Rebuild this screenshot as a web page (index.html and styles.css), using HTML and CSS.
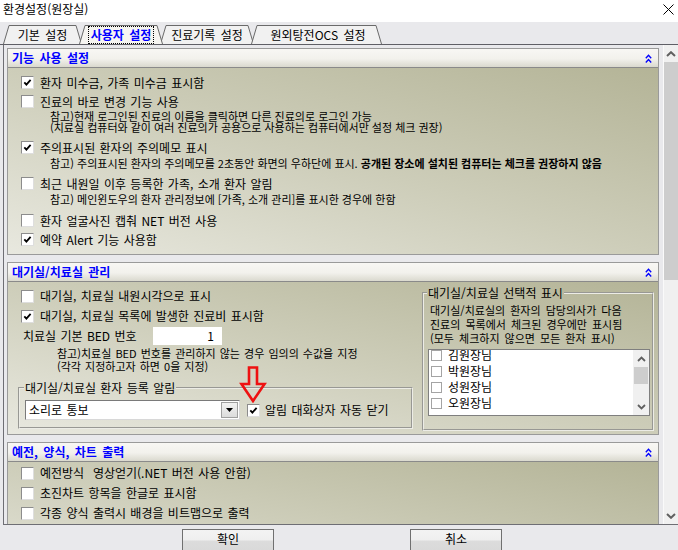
FILE: index.html
```html
<!DOCTYPE html>
<html lang="ko">
<head>
<meta charset="utf-8">
<title>환경설정(원장실)</title>
<link rel="stylesheet" href="styles.css">
</head>
<body>
<div class="window">
  <div class="titlebar">
    <span class="title">환경설정(원장실)</span>
    <svg class="close" width="11" height="11" viewBox="0 0 11 11"><path d="M0.5 0.5L10.5 10.5M10.5 0.5L0.5 10.5" stroke="#000" stroke-width="1" fill="none"/></svg>
  </div>

  <div class="tabstrip">
    <div class="tab w1"><svg class="tab-shape" width="79" height="19" viewBox="0 0 79 19"><polyline points="0.5,19 6,0.5 73,0.5 78.5,19"/></svg><span class="tab-text">기본 설정</span></div>
    <div class="tab w2 active"><svg class="tab-shape" width="84" height="19" viewBox="0 0 84 19"><polyline points="0.5,19 6,0.5 78,0.5 83.5,19"/></svg><span class="tab-text">사용자 설정</span></div>
    <div class="tab w3"><svg class="tab-shape" width="94" height="19" viewBox="0 0 94 19"><polyline points="0.5,19 6,0.5 88,0.5 93.5,19"/></svg><span class="tab-text">진료기록 설정</span></div>
    <div class="tab w4"><svg class="tab-shape" width="131" height="19" viewBox="0 0 131 19"><polyline points="0.5,19 6,0.5 125,0.5 130.5,19"/></svg><span class="tab-text">원외탕전OCS 설정</span></div>
  </div>

  <div class="tabpage">
    <div class="viewport">
      <div class="sections">

        <section class="sec">
          <div class="sec-head">
            <span class="sec-title">기능 사용 설정</span>
            <svg class="collapse" width="7" height="9" viewBox="0 0 7 9"><path d="M0.8 4.2L3.5 1.3L6.2 4.2M0.8 8.4L3.5 5.5L6.2 8.4" stroke="#0000ff" stroke-width="1.4" fill="none"/></svg>
          </div>
          <div class="sec-body b1">
            <div class="row"><span class="cb"><svg width="9" height="9" viewBox="0 0 9 9"><path d="M1.3 4.3L3.4 6.6L7.6 1.8" stroke="#000" stroke-width="1.8" fill="none"/></svg></span><span class="lbl">환자 미수금, 가족 미수금 표시함</span></div>
            <div class="row"><span class="cb"></span><span class="lbl">진료의 바로 변경 기능 사용</span></div>
            <div class="note">참고)현재 로그인된 진료의 이름을 클릭하면 다른 진료의로 로그인 가능<br>(치료실 컴퓨터와 같이 여러 진료의가 공용으로 사용하는 컴퓨터에서만 설정 체크 권장)</div>
            <div class="row mt5"><span class="cb"><svg width="9" height="9" viewBox="0 0 9 9"><path d="M1.3 4.3L3.4 6.6L7.6 1.8" stroke="#000" stroke-width="1.8" fill="none"/></svg></span><span class="lbl">주의표시된 환자의 주의메모 표시</span></div>
            <div class="note mt1">참고) 주의표시된 환자의 주의메모를 2초동안 화면의 우하단에 표시. <b>공개된 장소에 설치된 컴퓨터는 체크를 권장하지 않음</b></div>
            <div class="row mt5"><span class="cb"></span><span class="lbl">최근 내원일 이후 등록한 가족, 소개 환자 알림</span></div>
            <div class="note mt1">참고) 메인윈도우의 환자 관리정보에 [가족, 소개 관리]를 표시한 경우에 한함</div>
            <div class="row mt6"><span class="cb"></span><span class="lbl">환자 얼굴사진 캡춰 NET 버전 사용</span></div>
            <div class="row"><span class="cb"><svg width="9" height="9" viewBox="0 0 9 9"><path d="M1.3 4.3L3.4 6.6L7.6 1.8" stroke="#000" stroke-width="1.8" fill="none"/></svg></span><span class="lbl">예약 Alert 기능 사용함</span></div>
          </div>
        </section>

        <section class="sec">
          <div class="sec-head">
            <span class="sec-title">대기실/치료실 관리</span>
            <svg class="collapse" width="7" height="9" viewBox="0 0 7 9"><path d="M0.8 4.2L3.5 1.3L6.2 4.2M0.8 8.4L3.5 5.5L6.2 8.4" stroke="#0000ff" stroke-width="1.4" fill="none"/></svg>
          </div>
          <div class="sec-body b2">
            <div class="col-left">
              <div class="row r20"><span class="cb"></span><span class="lbl">대기실, 치료실 내원시각으로 표시</span></div>
              <div class="row r20"><span class="cb"><svg width="9" height="9" viewBox="0 0 9 9"><path d="M1.3 4.3L3.4 6.6L7.6 1.8" stroke="#000" stroke-width="1.8" fill="none"/></svg></span><span class="lbl">대기실, 치료실 목록에 발생한 진료비 표시함</span></div>
              <div class="bed-row"><span class="bed-label">치료실 기본 BED 번호</span><span class="num-input">1</span></div>
              <div class="note2">참고)치료실 BED 번호를 관리하지 않는 경우 임의의 수값을 지정<br>(각각 지정하고자 하면 0을 지정)</div>
              <fieldset class="group g-alarm">
                <legend>대기실/치료실 환자 등록 알림</legend>
                <div class="alarm-row">
                  <div class="combo"><span class="combo-text">소리로 통보</span><span class="combo-btn"><svg width="7" height="4" viewBox="0 0 7 4"><polygon points="0,0 7,0 3.5,4" fill="#000"/></svg></span></div>
                  <div class="row inline"><span class="cb"><svg width="9" height="9" viewBox="0 0 9 9"><path d="M1.3 4.3L3.4 6.6L7.6 1.8" stroke="#000" stroke-width="1.8" fill="none"/></svg></span><span class="lbl">알림 대화상자 자동 닫기</span></div>
                </div>
              </fieldset>
              <svg class="red-arrow" width="28" height="38" viewBox="0 0 28 38"><path d="M10 2.5H18V19H25.5L14 36L2.5 19H10Z" stroke="#ee1111" stroke-width="2.6" fill="none" stroke-linejoin="miter"/></svg>
            </div>
            <fieldset class="group g-select">
              <legend>대기실/치료실 선택적 표시</legend>
              <div class="sel-desc">대기실/치료실의 환자의 담당의사가 다음<br>진료의 목록에서 체크된 경우에만 표시됨<br>(모두 체크하지 않으면 모든 환자 표시)</div>
              <div class="listbox">
                <div class="list-view">
                  <div class="list-items">
                    <div class="item"><span class="icb"></span><span>김원장님</span></div>
                    <div class="item"><span class="icb"></span><span>박원장님</span></div>
                    <div class="item"><span class="icb"></span><span>성원장님</span></div>
                    <div class="item"><span class="icb"></span><span>오원장님</span></div>
                  </div>
                </div>
                <div class="list-scroll">
                  <div class="ls-arrow"><svg width="9" height="6" viewBox="0 0 9 6"><path d="M1 5L4.5 1.5L8 5" stroke="#606060" stroke-width="1.8" fill="none"/></svg></div>
                  <div class="ls-thumb"></div>
                  <div class="ls-track"></div>
                  <div class="ls-arrow"><svg width="9" height="6" viewBox="0 0 9 6"><path d="M1 1L4.5 4.5L8 1" stroke="#606060" stroke-width="1.8" fill="none"/></svg></div>
                </div>
              </div>
            </fieldset>
          </div>
        </section>

        <section class="sec">
          <div class="sec-head">
            <span class="sec-title">예전, 양식, 차트 출력</span>
            <svg class="collapse" width="7" height="9" viewBox="0 0 7 9"><path d="M0.8 4.2L3.5 1.3L6.2 4.2M0.8 8.4L3.5 5.5L6.2 8.4" stroke="#0000ff" stroke-width="1.4" fill="none"/></svg>
          </div>
          <div class="sec-body b3">
            <div class="row r20"><span class="cb"></span><span class="lbl">예전방식&nbsp; 영상얻기(.NET 버전 사용 안함)</span></div>
            <div class="row r20"><span class="cb"></span><span class="lbl">초진차트 항목을 한글로 표시함</span></div>
            <div class="row r20"><span class="cb"></span><span class="lbl">각종 양식 출력시 배경을 비트맵으로 출력</span></div>
          </div>
        </section>

      </div>
    </div>
    <div class="vscroll">
      <div class="vs-arrow"><svg width="10" height="6" viewBox="0 0 10 6"><path d="M1 5L5 1.2L9 5" stroke="#606060" stroke-width="2" fill="none"/></svg></div>
      <div class="vs-thumb"></div>
      <div class="vs-track"></div>
      <div class="vs-arrow"><svg width="10" height="6" viewBox="0 0 10 6"><path d="M1 1L5 4.8L9 1" stroke="#606060" stroke-width="2" fill="none"/></svg></div>
    </div>
  </div>

  <div class="buttons">
    <div class="btn">확인</div>
    <div class="btn">취소</div>
  </div>
</div>
</body>
</html>
```

FILE: styles.css
```css
* { box-sizing: border-box; }
html, body { margin: 0; padding: 0; }
body {
  width: 678px;
  height: 550px;
  overflow: hidden;
  background: #e9e9ec;
  font-family: "Noto Sans CJK KR", "Liberation Sans", sans-serif;
  font-size: 12px;
  color: #000;
}
.window { display: flex; flex-direction: column; height: 550px; overflow: hidden; }

/* title bar */
.titlebar {
  flex: none;
  height: 22px;
  background: #fff;
  display: flex;
  justify-content: space-between;
  align-items: flex-start;
  padding: 2px 4px 0 3px;
}
.title { font-size: 12px; line-height: 14px; }
.close { margin-top: 2px; }

/* tabs */
.tabstrip {
  flex: none;
  height: 23px;
  display: flex;
  align-items: flex-start;
  padding: 3px 0 0 3px;
  border-bottom: 1px solid #5f5f66;
  background: #e9e9ec;
}
.tab {
  position: relative;
  flex: none;
  height: 19px;
  display: flex;
  align-items: center;
  justify-content: center;
  margin-left: -3px;
}
.tab:first-child { margin-left: 0; }
.w1 { width: 79px; }
.w2 { width: 84px; }
.w3 { width: 94px; }
.w4 { width: 131px; padding-left: 3px; }
.tab-shape { position: absolute; left: 0; top: 0; }
.tab-shape polyline { fill: #f1f1f1; stroke: #6a6a6a; stroke-width: 1; }
.tab-text { position: relative; font-size: 12px; line-height: 15px; word-spacing: 2px; white-space: nowrap; }
.tab.active { z-index: 1; }
.tab.active polyline { fill: #f6f5f1; }
.tab.active .tab-text {
  font-weight: bold;
  color: #0000ff;
  border: 1px dotted #000;
  padding: 0 2px;
  line-height: 16px;
}

/* tab page */
.tabpage {
  flex: none;
  display: flex;
  height: 480px;
  margin-left: 3px;
  border-left: 1px solid #6e6e74;
  border-bottom: 1px solid #6e6e74;
}
.viewport {
  width: 659px;
  height: 479px;
  overflow: hidden;
  padding: 3px 0 0 3px;
  background: #e9e9ec;
}
.sections { display: flex; flex-direction: column; gap: 7px; }
.sec { width: 652px; border: 1px solid #9a9a9a; flex: none; }
.sec-head {
  height: 19px;
  border-bottom: 1px solid #8a8a8a;
  background: linear-gradient(#f8f7f4, #f2f1ec 55%, #dad9ce);
  display: flex;
  align-items: center;
  justify-content: space-between;
  padding: 0 6px 0 4px;
}
.sec-title { color: #0000ff; font-weight: bold; font-size: 12px; line-height: 14px; word-spacing: 2px; }
.sec-body {
  background: linear-gradient(to top right, #e8e8df 0%, #cdcdb9 50%, #b4b497 100%);
}
.b1 { height: 186px; padding-top: 5px; }
.b2 { height: 152px; display: flex; align-items: flex-start; }
.b3 { height: 140px; padding-top: 1px; }

/* rows */
.row {
  display: flex;
  align-items: center;
  height: 19px;
  padding-left: 13px;
  white-space: nowrap;
}
.r20 { height: 20px; }
.mt1 { margin-top: 1px; }
.mt5 { margin-top: 5px; }
.mt6 { margin-top: 6px; }
.cb {
  flex: none;
  width: 13px;
  height: 13px;
  margin-right: 6px;
  background: #fff;
  border: 1px solid;
  border-color: #8c8c8c #dedede #dedede #8c8c8c;
  display: flex;
  align-items: center;
  justify-content: center;
}
.lbl { font-size: 12px; line-height: 14px; word-spacing: 1px; }
.note {
  padding-left: 42px;
  font-size: 11px;
  line-height: 11px;
  white-space: nowrap;
}
.note b { font-weight: bold; }

/* section 2 */
.col-left { position: relative; width: 414px; flex: none; padding-top: 4px; }
.bed-row { display: flex; align-items: center; height: 20px; padding-left: 15px; }
.bed-label { width: 130px; flex: none; font-size: 12px; line-height: 14px; word-spacing: 1px; white-space: nowrap; }
.num-input {
  width: 69px;
  height: 18px;
  background: #fff;
  text-align: right;
  padding-right: 8px;
  font-size: 12px;
  line-height: 18px;
}
.note2 {
  margin-top: 1px;
  padding-left: 49px;
  font-size: 11px;
  line-height: 13px;
  word-spacing: 1px;
  white-space: nowrap;
}
.group {
  margin: 0;
  min-width: 0;
  border: 2px groove #ecece6;
}
.group legend {
  padding: 0 1px;
  font-size: 12px;
  line-height: 14px;
  word-spacing: 1px;
  white-space: nowrap;
}
.g-alarm {
  margin: 8px 0 0 10px;
  width: 395px;
  padding: 5px 5px 7px 4px;
}
.alarm-row { display: flex; align-items: center; }
.combo {
  width: 215px;
  height: 20px;
  margin-left: 1px;
  background: #fff;
  border: 1px solid;
  border-color: #7a7a7a #d8d8d8 #d8d8d8 #7a7a7a;
  display: flex;
  align-items: center;
  justify-content: space-between;
  padding: 0 1px 0 3px;
}
.combo-text { font-size: 12px; line-height: 14px; word-spacing: 1px; }
.combo-btn {
  width: 17px;
  height: 16px;
  background: linear-gradient(#f2f2f2, #dcdcdc);
  border: 1px solid #a0a0a0;
  display: flex;
  align-items: center;
  justify-content: center;
}
.row.inline { padding-left: 7px; height: 20px; }
.row.inline .cb { margin-right: 5px; }
.red-arrow { position: absolute; left: 231px; top: 83px; }

.g-select {
  margin-top: 3px;
  width: 232px;
  padding: 0 3px 13px 3px;
}
.g-select legend { line-height: 16px; }
.sel-desc {
  padding: 2px 0 0 3px;
  font-size: 11px;
  line-height: 14px;
  word-spacing: 2px;
  white-space: nowrap;
}
.listbox {
  margin-top: 4px;
  margin-left: 1px;
  width: 222px;
  height: 67px;
  border: 1px solid #7f7f7f;
  background: #fff;
  display: flex;
}
.list-view { flex: 1; overflow: hidden; }
.list-items { margin-top: -3px; }
.item { height: 16px; display: flex; align-items: center; padding-left: 2px; font-size: 12px; line-height: 14px; }
.icb {
  width: 11px;
  height: 11px;
  border: 1px solid #a4a4a4;
  background: #fff;
  margin-right: 6px;
  flex: none;
}
.list-scroll { width: 16px; background: #f0f0f0; display: flex; flex-direction: column; }
.ls-arrow { height: 17px; display: flex; align-items: center; justify-content: center; flex: none; }
.ls-thumb { height: 17px; background: #cdcdcd; margin: 0 1px; flex: none; }
.ls-track { flex: 1; }

/* main scrollbar */
.vscroll {
  width: 15px;
  border-left: 1px solid #fafafa;
  background: #f0f0f0;
  display: flex;
  flex-direction: column;
}
.vs-arrow { height: 17px; display: flex; align-items: center; justify-content: center; flex: none; }
.vs-thumb { height: 218px; background: #cdcdcd; flex: none; }
.vs-track { flex: 1; }

/* buttons */
.buttons {
  flex: 1;
  min-height: 0;
  display: flex;
  align-items: flex-start;
  gap: 136px;
  padding: 4px 0 0 182px;
  background: #e9e9ec;
}
.btn {
  flex: none;
  width: 92px;
  height: 26px;
  border: 1px solid #707070;
  background: linear-gradient(#f3f3f3 0, #efefef 10px, #dcdcdc 11px, #d8d8d8);
  text-align: center;
  font-size: 12px;
  line-height: 17px;
}
```
